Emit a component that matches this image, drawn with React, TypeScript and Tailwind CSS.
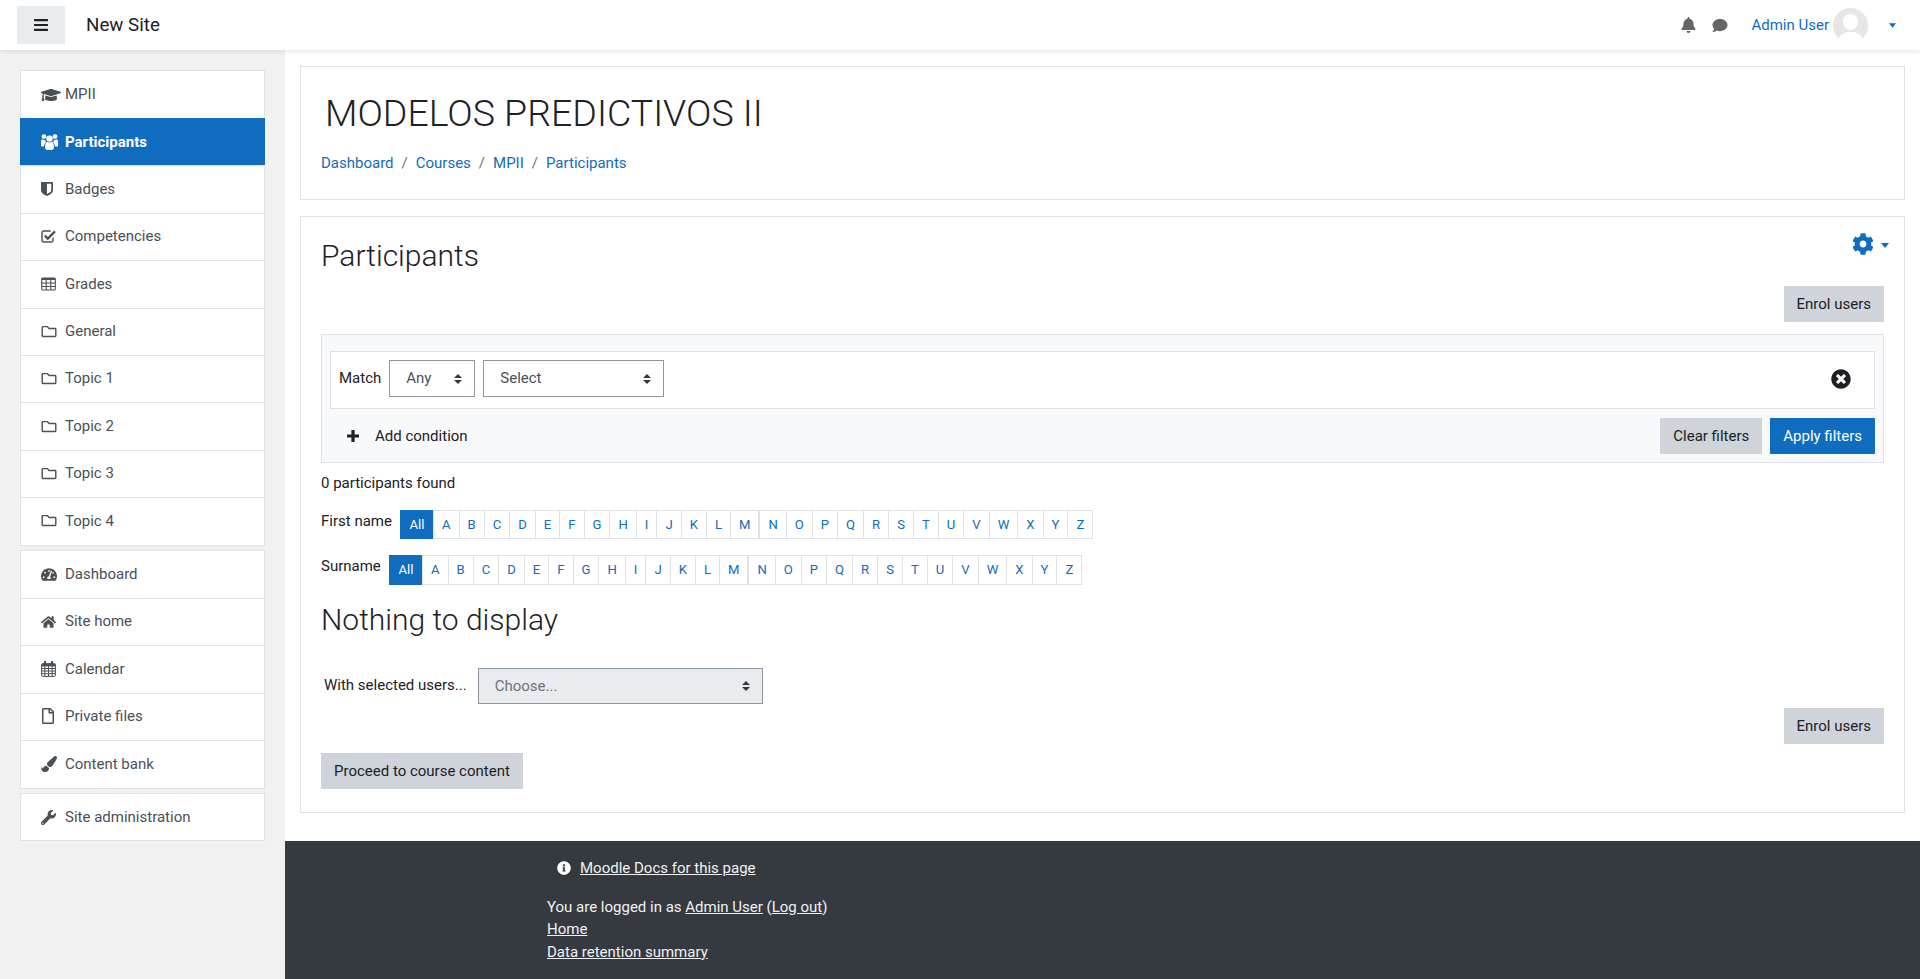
import type { ReactNode } from "react";
import {
  FaBell,
  FaCog,
  FaComment,
  FaGraduationCap,
  FaHome,
  FaInfoCircle,
  FaPaintBrush,
  FaRegFile,
  FaRegFolder,
  FaTachometerAlt,
  FaTimesCircle,
  FaWrench,
} from "react-icons/fa";

interface NavEntry {
  label: string;
  icon: ReactNode;
  active?: boolean;
}

function UsersIcon() {
  return (
    <svg viewBox="0 0 17 16" className="h-[16px] w-[17px]" fill="currentColor">
      <circle cx="8.5" cy="4.6" r="3.2" />
      <circle cx="3" cy="2.6" r="2.4" />
      <circle cx="14" cy="2.6" r="2.4" />
      <path d="M4 13.600c0-3.200 1-5.800 2.400-5.800.6.500 1.300.8 2.100.8s1.500-.3 2.100-.8c1.400 0 2.400 2.600 2.400 5.800 0 1.500-1 2.300-2.300 2.300H6.300C5 15.900 4 15.100 4 13.600z" />
      <path d="M0 8.200c0-1.800.4-2.900 1.200-2.900.5.400 1.100.6 1.800.6.400 0 .7-.1 1-.2.100 1.100.5 2 1.100 2.600-1.200.8-2 2.400-2.100 4.300H1.100C.5 12.600 0 12.200 0 11.500z" />
      <path d="M17 8.200c0-1.800-.4-2.900-1.200-2.900-.5.400-1.100.6-1.800.6-.4 0-.7-.1-1-.2-.1 1.100-.5 2-1.100 2.600 1.200.8 2 2.400 2.100 4.300h2.900c.6 0 1.100-.4 1.100-1.100z" />
    </svg>
  );
}

function ShieldIcon() {
  return (
    <svg viewBox="0 0 12 14" className="h-[14px] w-[12px]" fill="currentColor">
      <path
        fillRule="evenodd"
        d="M.6 0h10.800c.3 0 .6.3.6.6V8c0 3-3.200 5-6 6-2.800-1-6-3-6-6V.6C0 .3.300 0 .6 0zM6 1.800V12.100c2-.9 4.300-2.300 4.300-4.100V1.800z"
      />
    </svg>
  );
}

function CheckSquareIcon() {
  return (
    <svg viewBox="0 0 15 15" className="h-[15px] w-[15px]" fill="none" stroke="currentColor">
      <path strokeWidth="1.400" d="M12 8.500v2.800c0 1-.7 1.700-1.700 1.700H2.700c-1 0-1.700-.7-1.700-1.700V3.700C1 2.700 1.700 2 2.700 2h7" />
      <path strokeWidth="2.200" d="M3.800 6.600l3 3L14 2.400" />
    </svg>
  );
}

function TableIcon() {
  return (
    <svg viewBox="0 0 15 14" className="h-[14px] w-[15px]" fill="none" stroke="currentColor" strokeWidth="1.100">
      <rect x="0.700" y="1" width="13.600" height="12" rx="1" />
      <path strokeWidth="2" d="M.7 2h13.600" />
      <path d="M.7 6h13.600M.7 9.500h13.600M5.200 2v11M9.800 2v11" />
    </svg>
  );
}

function CalendarIcon() {
  return (
    <svg viewBox="0 0 15 16" className="h-[16px] w-[15px]" fill="none" stroke="currentColor" strokeWidth="1">
      <rect x="0.600" y="2.600" width="13.800" height="12.800" rx="1" />
      <path strokeWidth="2.400" d="M.6 4.200h13.800" />
      <path strokeWidth="2" d="M4 0v4M11 0v4" />
      <path d="M.6 7.500h13.800M.6 10h13.800M.6 12.700h13.800M3.800 5v10M7.500 5v10M11.200 5v10" />
    </svg>
  );
}

function PlusIcon() {
  return (
    <svg viewBox="0 0 12 12" className="h-[12px] w-[12px]" fill="currentColor">
      <path d="M4.400 0h3.200v4.400H12v3.200H7.600V12H4.400V7.600H0V4.400h4.400z" />
    </svg>
  );
}

function BarsIcon() {
  return (
    <svg viewBox="0 0 14 12" className="h-[12px] w-[14px]" fill="currentColor">
      <rect y="0" width="14" height="2.200" rx="0.500" />
      <rect y="4.900" width="14" height="2.200" rx="0.500" />
      <rect y="9.800" width="14" height="2.200" rx="0.500" />
    </svg>
  );
}

const folder = <FaRegFolder className="h-[15px] w-[16px]" />;

const courseNav: NavEntry[] = [
  { label: "MPII", icon: <FaGraduationCap className="h-[16px] w-[20px]" /> },
  { label: "Participants", icon: <UsersIcon />, active: true },
  { label: "Badges", icon: <ShieldIcon /> },
  { label: "Competencies", icon: <CheckSquareIcon /> },
  { label: "Grades", icon: <TableIcon /> },
  { label: "General", icon: folder },
  { label: "Topic 1", icon: folder },
  { label: "Topic 2", icon: folder },
  { label: "Topic 3", icon: folder },
  { label: "Topic 4", icon: folder },
];

const siteNav: NavEntry[] = [
  { label: "Dashboard", icon: <FaTachometerAlt className="h-[15px] w-[16px]" /> },
  { label: "Site home", icon: <FaHome className="h-[14px] w-[15px]" /> },
  { label: "Calendar", icon: <CalendarIcon /> },
  { label: "Private files", icon: <FaRegFile className="h-[16px] w-[14px]" /> },
  { label: "Content bank", icon: <FaPaintBrush className="h-[16px] w-[16px]" /> },
];

const letters1 = "ABCDEFGHIJKLM".split("");
const letters2 = "NOPQRSTUVWXYZ".split("");

function NavGroup({ items }: { items: NavEntry[] }) {
  return (
    <div className="border border-[#dee2e6] bg-white">
      {items.map((item, i) => (
        <div
          key={item.label}
          className={
            item.active
              ? "-mx-px flex h-[47.4px] items-center bg-[#0f6cbf] pl-[21px] pt-[1px] font-bold text-white"
              : `flex items-center pl-[20px] text-[#495057] ${i > 0 ? "h-[47.4px] border-t border-[#dee2e6] pb-[1px]" : items.length === 1 ? "h-[46px]" : "h-[47px]"}`
          }
        >
          <span className="flex w-[24px] shrink-0 items-center">{item.icon}</span>
          <span>{item.label}</span>
        </div>
      ))}
    </div>
  );
}

function Caret({ className }: { className: string }) {
  return (
    <svg viewBox="0 0 8 5" className={className} fill="currentColor">
      <path d="M0 0h8L4 5z" />
    </svg>
  );
}

function Updown() {
  return (
    <svg viewBox="0 0 8 10" className="h-[10px] w-[8px]" fill="#343a40">
      <path d="M4 0l4 4H0zM0 6h8l-4 4z" />
    </svg>
  );
}

function SelectBox({ label, className }: { label: string; className: string }) {
  return (
    <div className={`flex h-[37px] items-center justify-between border border-[#8f959e] pl-[16px] pr-[12px] ${className}`}>
      <span>{label}</span>
      <Updown />
    </div>
  );
}

function Btn({ children, primary, className = "" }: { children: ReactNode; primary?: boolean; className?: string }) {
  return (
    <div
      className={`flex h-[36px] items-center px-[13px] ${primary ? "bg-[#0f6cbf] text-white" : "bg-[#ced4da] text-[#1d2125]"} ${className}`}
    >
      {children}
    </div>
  );
}

function InitialBar({ label, labelWidth }: { label: string; labelWidth: string }) {
  return (
    <div className="flex items-start">
      <span className={`${labelWidth} text-[#1d2125]`}>{label}</span>
      <div className="flex text-[13.125px] leading-[19.7px] text-[#0f6cbf]">
        <span className="border border-[#0f6cbf] bg-[#0f6cbf] px-[8.5px] py-[4px] text-white">All</span>
        {letters1.map((c) => (
          <span key={c} className="-ml-px border border-[#dee2e6] px-[8px] py-[4px] first:ml-0">
            {c}
          </span>
        ))}
        {letters2.map((c) => (
          <span key={c} className={`border border-[#dee2e6] px-[8px] py-[4px] ${c === "N" ? "" : "-ml-px"}`}>
            {c}
          </span>
        ))}
      </div>
    </div>
  );
}

export default function App() {
  return (
    <div className="flex h-screen flex-col overflow-hidden bg-white font-['Roboto',sans-serif] text-[15px] leading-[22.5px] text-[#1d2125]">
      <header className="relative z-10 flex h-[50px] shrink-0 items-center bg-white pl-[17px] pr-[24px] shadow-[0_2px_4px_rgba(0,0,0,0.08)]">
        <div className="flex h-[38px] w-[48px] items-center justify-center bg-[#e9ecef]">
          <BarsIcon />
        </div>
        <span className="ml-[21px] text-[18.75px]">New Site</span>
        <div className="ml-auto flex items-center text-[#666666]">
          <FaBell className="h-[16px] w-[15px]" />
          <FaComment className="ml-[16px] h-[15px] w-[16px]" />
          <span className="ml-[23px] text-[#0f6cbf]">Admin User</span>
          <div className="relative ml-[4px] h-[35px] w-[35px] overflow-hidden rounded-full bg-[#e6e6e6]">
            <div className="absolute left-[10px] top-[6px] h-[16px] w-[15px] rounded-full bg-white" />
            <div className="absolute left-[5px] top-[24px] h-[20px] w-[25px] rounded-full bg-white" />
          </div>
          <Caret className="ml-[21px] h-[5px] w-[7px] text-[#0f6cbf]" />
        </div>
      </header>

      <div className="flex min-h-0 flex-1">
        <aside className="flex w-[285px] shrink-0 flex-col gap-[4.5px] bg-[#f1f1f1] px-[20px] pt-[20px]">
          <NavGroup items={courseNav} />
          <NavGroup items={siteNav} />
          <NavGroup items={[{ label: "Site administration", icon: <FaWrench className="h-[15px] w-[15px]" /> }]} />
        </aside>

        <div className="flex min-w-0 flex-1 flex-col">
          <main className="px-[15px] pt-[16px]">
            <section className="h-[134px] border border-[#dee2e6] px-[20px] pt-[24px]">
              <h1 className="ml-[4px] text-[37.5px] font-light leading-[45px]">MODELOS PREDICTIVOS II</h1>
              <div className="mt-[16px] flex gap-[8px] text-[#6a737b]">
                <span className="text-[#0f6cbf]">Dashboard</span>
                <span>/</span>
                <span className="text-[#0f6cbf]">Courses</span>
                <span>/</span>
                <span className="text-[#0f6cbf]">MPII</span>
                <span>/</span>
                <span className="text-[#0f6cbf]">Participants</span>
              </div>
            </section>

            <section className="mt-[16px] h-[597px] border border-[#dee2e6] px-[20px]">
              <div className="flex h-[57px] items-start justify-between">
                <h2 className="mt-[21px] text-[30px] font-light leading-[36px]">Participants</h2>
                <div className="-mr-[5px] mt-[16px] flex items-center text-[#0f6cbf]">
                  <FaCog className="h-[22px] w-[22px]" />
                  <Caret className="ml-[7px] mt-[3px] h-[5px] w-[8px]" />
                </div>
              </div>
              <div className="mt-[12px] flex justify-end">
                <Btn>Enrol users</Btn>
              </div>

              <div className="mt-[12px] h-[129px] border border-[#dee2e6] bg-[#f8f9fa] px-[8px] pt-[16px]">
                <div className="flex h-[58px] items-start border border-[#dee2e6] bg-white pl-[8px] pr-[23px] pt-[8px]">
                  <span className="mt-[7px]">Match</span>
                  <SelectBox label="Any" className="ml-[8px] w-[86px] text-[#495057]" />
                  <SelectBox label="Select" className="ml-[8px] w-[181px] text-[#495057]" />
                  <FaTimesCircle className="ml-auto mt-[9px] h-[20px] w-[20px]" />
                </div>
                <div className="mt-[9px] flex items-center">
                  <span className="ml-[17px]">
                    <PlusIcon />
                  </span>
                  <span className="ml-[16px]">Add condition</span>
                  <Btn className="ml-auto">Clear filters</Btn>
                  <Btn primary className="ml-[8px]">
                    Apply filters
                  </Btn>
                </div>
              </div>

              <p className="mt-[9px]">0 participants found</p>
              <div className="mt-[15px]">
                <InitialBar label="First name" labelWidth="w-[79px]" />
              </div>
              <div className="mt-[16px]">
                <InitialBar label="Surname" labelWidth="w-[68px]" />
              </div>

              <h3 className="mt-[17px] text-[30px] font-light leading-[36px]">Nothing to display</h3>

              <div className="mt-[30px] flex items-center pl-[3px]">
                <span className="mb-[2px]">With selected users...</span>
                <div className="ml-[11px] flex h-[36px] w-[285px] items-center justify-between border border-[#8f959e] bg-[#e9ecef] pl-[16px] pr-[12px] text-[#6a737b]">
                  <span>Choose...</span>
                  <Updown />
                </div>
              </div>

              <div className="mt-[4px] flex justify-end">
                <Btn>Enrol users</Btn>
              </div>
              <div className="mt-[9px] flex">
                <Btn>Proceed to course content</Btn>
              </div>
            </section>
          </main>

          <footer className="mt-[28px] flex-1 bg-[#343a40] pl-[262px] pt-[16px] text-[#f1f1f1]">
            <div className="flex items-center pl-[10px]">
              <FaInfoCircle className="h-[14px] w-[14px] text-white" />
              <span className="ml-[9px] underline">Moodle Docs for this page</span>
            </div>
            <p className="mt-[16px]">
              You are logged in as <span className="underline">Admin User</span> (<span className="underline">Log out</span>)
            </p>
            <p className="underline">Home</p>
            <p className="underline">Data retention summary</p>
          </footer>
        </div>
      </div>
    </div>
  );
}
